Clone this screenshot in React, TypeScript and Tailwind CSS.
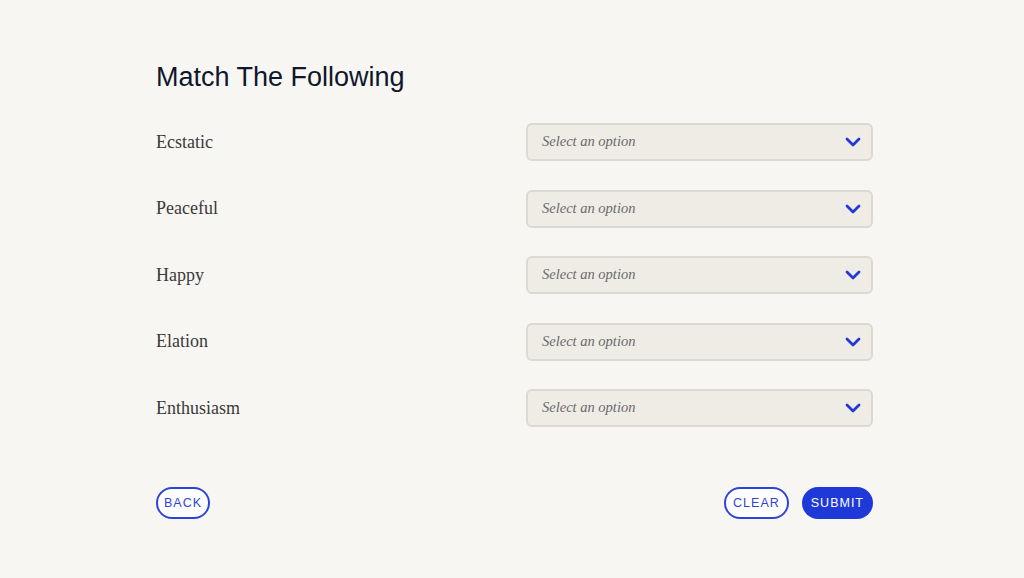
import React from "react";

const items = ["Ecstatic", "Peaceful", "Happy", "Elation", "Enthusiasm"];

function Chevron() {
  return (
    <svg width="16" height="10" viewBox="0 0 16 10" fill="none">
      <path d="M2 2l6 6 6-6" stroke="#2238d8" strokeWidth="2.8" strokeLinecap="round" strokeLinejoin="round" />
    </svg>
  );
}

export default function App() {
  return (
    <div className="min-h-[578px] w-full bg-[#f7f6f3]">
      <div className="ml-[156px] w-[717px] pt-[58px]">
        <h1
          className="text-[27px] leading-[38px] text-[#0f172a]"
          style={{ fontFamily: '"Liberation Sans", Arial, sans-serif' }}
        >
          Match The Following
        </h1>
        <div className="mt-[27px] flex flex-col gap-[28.5px]">
          {items.map((it) => (
            <div key={it} className="flex items-center justify-between">
              <span
                className="text-[18px] text-[#3a3a3a]"
                style={{ fontFamily: '"Liberation Serif", Georgia, serif' }}
              >
                {it}
              </span>
              <div className="flex h-[38px] w-[347px] items-center justify-between rounded-[6px] border-2 border-[#dcd9d3] bg-[#efece6] pl-[14px] pr-[10px]">
                <span
                  className="text-[14.5px] italic text-[#6a6a6a]"
                  style={{ fontFamily: '"Liberation Serif", Georgia, serif' }}
                >
                  Select an option
                </span>
                <Chevron />
              </div>
            </div>
          ))}
        </div>
        <div
          className="mt-[60px] flex items-center justify-between"
          style={{ fontFamily: '"Liberation Sans", Arial, sans-serif' }}
        >
          <button className="h-[32px] rounded-full border-2 border-[#2e44d9] bg-white px-[6px] text-[12.5px] tracking-[1px] text-[#2e44d9]">
            BACK
          </button>
          <div className="flex items-center gap-[13px]">
            <button className="h-[32px] rounded-full border-2 border-[#2e44d9] bg-white px-[7px] text-[12.5px] tracking-[1px] text-[#2e44d9]">
              CLEAR
            </button>
            <button className="h-[32px] rounded-full bg-[#1f38d8] px-[9px] text-[12.5px] tracking-[1px] text-white">
              SUBMIT
            </button>
          </div>
        </div>
      </div>
    </div>
  );
}
